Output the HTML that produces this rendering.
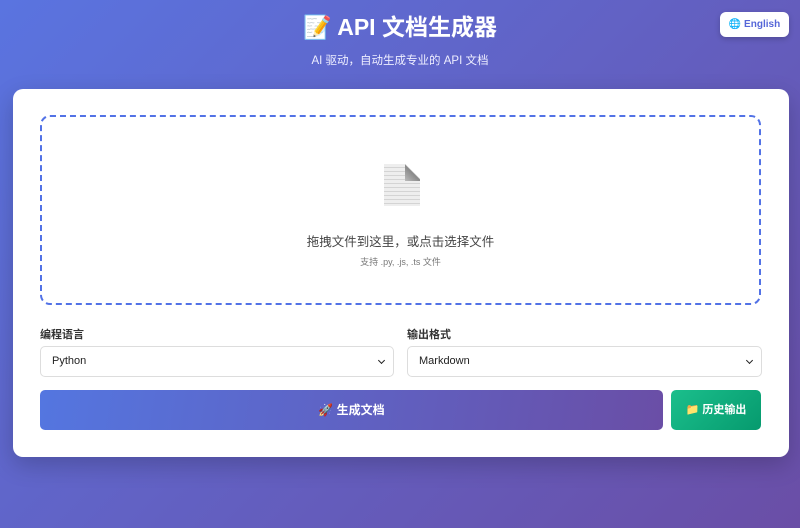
<!DOCTYPE html>
<html><head><meta charset="utf-8"><style>
*{box-sizing:border-box;margin:0;padding:0}
body{width:800px;height:528px;overflow:hidden;background:linear-gradient(135deg,#5a74e0 0%,#6a4ea6 100%);font-family:"Liberation Sans","Noto Sans CJK SC",sans-serif;position:relative}
h1{position:absolute;top:10px;left:0;width:800px;text-align:center;color:#fff;font-size:23px;font-weight:bold;line-height:34px}
.sub{position:absolute;top:52px;width:800px;text-align:center;color:#eef;font-size:11.5px}
.lang{position:absolute;left:720px;top:12px;width:69px;height:25px;background:#fff;border-radius:6px;color:#5566d8;font-size:10px;font-weight:bold;text-align:center;line-height:26px;box-shadow:0 2px 6px rgba(0,0,0,.2)}
.card{position:absolute;left:13px;top:89px;width:776px;height:368px;background:#fff;border-radius:10px;box-shadow:0 8px 24px rgba(0,0,0,.2)}
.drop{position:absolute;left:27px;top:26px;width:721px;height:190px;border:2px dashed #5272e6;border-radius:10px;text-align:center}
.doc{position:absolute;left:342px;top:47px;width:36px;height:42px;background:repeating-linear-gradient(180deg,#eee 0 3px,#d4d4d4 3px 4px);clip-path:polygon(0 0,60% 0,100% 40%,100% 100%,0 100%)}
.fold{position:absolute;left:363px;top:47px;width:15px;height:17px;background:linear-gradient(225deg,#fff 0 45%,#888 50%,#bbb 100%)}
.t1{position:absolute;top:114px;width:100%;font-size:12.5px;color:#444}
.t2{position:absolute;top:138px;width:100%;font-size:9px;color:#777}
.lbl{position:absolute;top:237px;font-size:11px;font-weight:bold;color:#333}
.sel{position:absolute;top:257px;height:31px;border:1px solid #ddd;border-radius:5px;font-size:11px;color:#222;line-height:29px;padding-left:11px}
.sel:after{content:"";position:absolute;right:9px;top:11px;width:4px;height:4px;border-right:1.5px solid #222;border-bottom:1.5px solid #222;transform:rotate(45deg)}
.gen{position:absolute;left:27px;top:301px;width:623px;height:40px;border-radius:5px;background:linear-gradient(100deg,#5476e0,#6a4ea6);color:#fff;font-size:12px;font-weight:bold;text-align:center;line-height:40px}
.hist{position:absolute;left:658px;top:301px;width:90px;height:40px;border-radius:5px;background:linear-gradient(135deg,#1bbf8c,#069a6e);color:#fff;font-size:11px;font-weight:bold;text-align:center;line-height:40px}
</style></head><body>
<h1>📝 API 文档生成器</h1>
<div class="sub">AI 驱动，自动生成专业的 API 文档</div>
<div class="lang">🌐 English</div>
<div class="card">
<div class="drop"><div class="doc"></div><div class="fold"></div><div class="t1">拖拽文件到这里，或点击选择文件</div><div class="t2">支持 .py, .js, .ts 文件</div></div>
<div class="lbl" style="left:27px">编程语言</div>
<div class="lbl" style="left:394px">输出格式</div>
<div class="sel" style="left:27px;width:354px">Python</div>
<div class="sel" style="left:394px;width:355px">Markdown</div>
<div class="gen">🚀 生成文档</div>
<div class="hist">📁 历史输出</div>
</div>
</body></html>
